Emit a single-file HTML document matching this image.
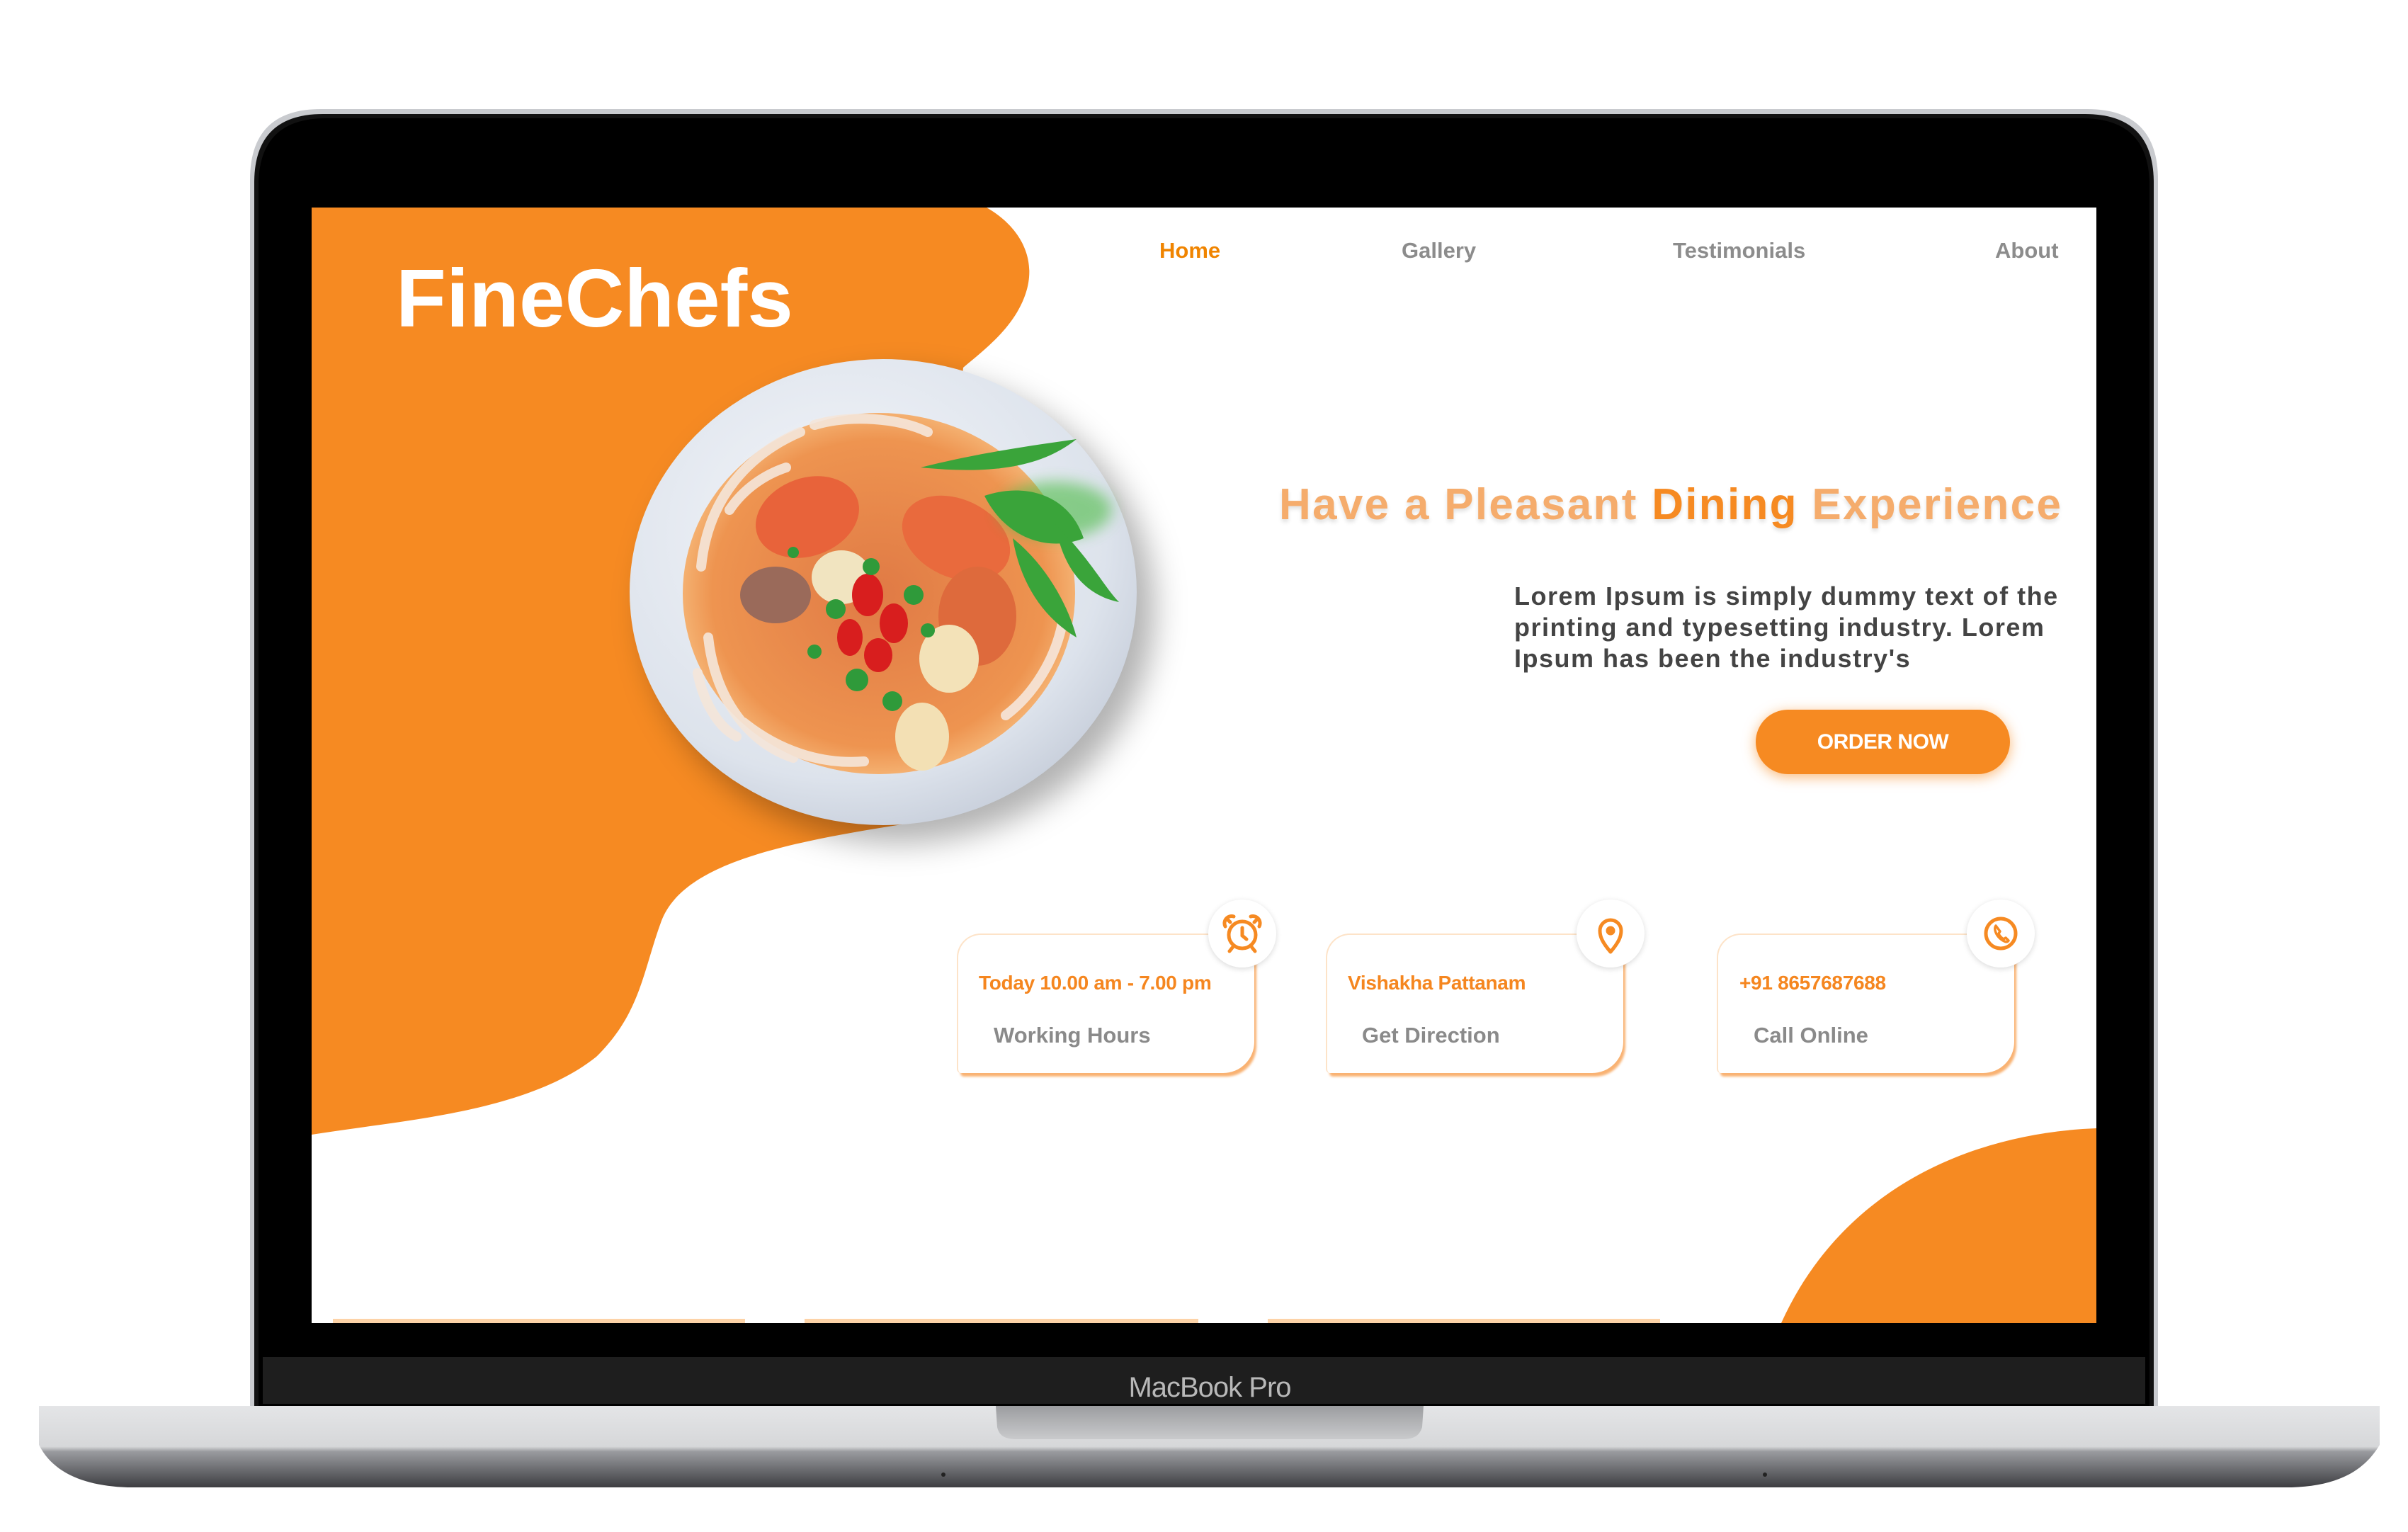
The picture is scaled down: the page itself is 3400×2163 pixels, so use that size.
<!DOCTYPE html>
<html><head><meta charset="utf-8">
<style>
*{margin:0;padding:0;box-sizing:border-box}
body{width:3400px;height:2163px;background:#fff;position:relative;overflow:hidden;font-family:"Liberation Sans",sans-serif}
.a{position:absolute;white-space:nowrap}
.nav{font-size:31px;font-weight:bold;color:#8c8c8c}
.card{position:absolute;width:420px;height:197px;background:#fff;border-radius:34px 6px 44px 6px;border-top:2px solid #fde3c8;border-left:2px solid #fde3c8;box-shadow:4px 6px 3px -1px #f9b272}
.ic{position:absolute;width:96px;height:96px;border-radius:50%;background:#fff;box-shadow:0 2px 8px rgba(0,0,0,.15)}
.o{font-size:28px;font-weight:bold;color:#f5861f;letter-spacing:-.3px}
.g{font-size:31px;font-weight:bold;color:#8a8a8a}
</style></head><body>
<svg class="a" style="left:0;top:0" width="3400" height="2163" viewBox="0 0 3400 2163">
<defs>
<linearGradient id="base" x1="0" y1="0" x2="0" y2="1">
<stop offset="0" stop-color="#e4e5e7"/><stop offset=".5" stop-color="#d6d7d9"/><stop offset=".56" stop-color="#9a9b9f"/><stop offset="1" stop-color="#3d3e42"/></linearGradient>
<linearGradient id="notch" x1="0" y1="0" x2="0" y2="1"><stop offset="0" stop-color="#9c9da0"/><stop offset="1" stop-color="#c9cacc"/></linearGradient>
<radialGradient id="bowl" cx=".42" cy=".38" r=".65"><stop offset="0" stop-color="#f4f6fa"/><stop offset=".8" stop-color="#dde3ec"/><stop offset="1" stop-color="#c9d0dc"/></radialGradient>
<radialGradient id="soup" cx=".5" cy=".5" r=".5"><stop offset="0" stop-color="#e07a45"/><stop offset=".85" stop-color="#ee9450"/><stop offset="1" stop-color="#f4b070"/></radialGradient>
<filter id="sh" x="-30%" y="-30%" width="160%" height="160%"><feGaussianBlur stdDeviation="22"/></filter>
<filter id="gl" x="-30%" y="-30%" width="160%" height="160%"><feGaussianBlur stdDeviation="10"/></filter>
</defs>
<path d="M55,1985 L3360,1985 L3360,2040 C3336,2080 3296,2098 3236,2100 L180,2100 C120,2098 75,2080 55,2040 Z" fill="url(#base)"/>
<path d="M1406,1985 L2010,1985 L2008,2015 C2004,2028 1995,2032 1980,2032 L1436,2032 C1420,2032 1411,2028 1408,2015 Z" fill="url(#notch)"/>
<circle cx="1332" cy="2082" r="3" fill="#222"/><circle cx="2492" cy="2082" r="3" fill="#222"/>
<path d="M353,1985 L353,254 Q353,154 453,154 L2947,154 Q3047,154 3047,254 L3047,1985 Z" fill="#c9cbcf"/>
<path d="M359,1985 L359,258 Q359,161 456,161 L2944,161 Q3041,161 3041,258 L3041,1985 Z" fill="#111"/>
<path d="M365,1985 L365,262 Q365,167 460,167 L2940,167 Q3035,167 3035,262 L3035,1985 Z" fill="#000"/>
<rect x="371" y="1916" width="2658" height="66" fill="#1e1e1e"/>
<text x="1708" y="1972" text-anchor="middle" font-family="Liberation Sans" font-size="40" fill="#b8b8b8" letter-spacing="-1">MacBook Pro</text>
<rect x="440" y="293" width="2520" height="1575" fill="#fff"/>
<path d="M440,293 L1393,293 C1440,320 1465,365 1448,415 C1432,462 1392,492 1360,519 L1300,1160 C1100,1190 965,1220 934,1300 C908,1370 905,1430 842,1492 C742,1572 562,1582 440,1602 Z" fill="#f68a22"/>
<path d="M2515,1868 C2600,1680 2780,1600 2960,1593 L2960,1868 Z" fill="#f68a22"/>
<rect x="470" y="1862" width="582" height="6" fill="#fdd3a8"/>
<rect x="1136" y="1862" width="556" height="6" fill="#fdd3a8"/>
<rect x="1790" y="1862" width="554" height="6" fill="#fdd3a8"/>
<ellipse cx="1270" cy="860" rx="360" ry="330" fill="rgba(0,0,0,.3)" filter="url(#sh)"/>
<ellipse cx="1247" cy="836" rx="358" ry="329" fill="url(#bowl)"/>
<ellipse cx="1241" cy="838" rx="277" ry="255" fill="url(#soup)"/>
<g fill="none" stroke="#f5e6da" stroke-width="14" stroke-linecap="round" opacity=".9">
<path d="M990,800 C1000,700 1060,640 1130,610"/>
<path d="M1000,900 C1010,990 1060,1050 1120,1070"/>
<path d="M1050,1020 C1100,1060 1160,1080 1220,1075"/>
<path d="M1150,600 C1200,585 1270,590 1310,610"/>
<path d="M1420,1010 C1460,980 1490,930 1500,880"/>
<path d="M1030,720 C1050,690 1080,670 1110,660"/>
<path d="M985,950 C995,1000 1020,1030 1040,1040"/>
</g>
<ellipse cx="1140" cy="730" rx="75" ry="55" fill="#e8633a" transform="rotate(-20 1140 730)"/>
<ellipse cx="1350" cy="760" rx="80" ry="55" fill="#e96a3d" transform="rotate(25 1350 760)"/>
<ellipse cx="1380" cy="870" rx="55" ry="70" fill="#de6a3c"/>
<ellipse cx="1095" cy="840" rx="50" ry="40" fill="#9a6a5a"/>
<ellipse cx="1188" cy="815" rx="42" ry="38" fill="#f1e4c0"/>
<ellipse cx="1340" cy="930" rx="42" ry="48" fill="#f3e2b8"/>
<ellipse cx="1302" cy="1040" rx="38" ry="48" fill="#f3e0b4"/>
<g fill="#d81e1e"><ellipse cx="1225" cy="840" rx="22" ry="30"/><ellipse cx="1262" cy="880" rx="20" ry="28"/><ellipse cx="1200" cy="900" rx="18" ry="26"/><ellipse cx="1240" cy="925" rx="20" ry="24"/></g>
<g fill="#2f9a3a"><circle cx="1180" cy="860" r="14"/><circle cx="1230" cy="800" r="12"/><circle cx="1290" cy="840" r="14"/><circle cx="1210" cy="960" r="16"/><circle cx="1260" cy="990" r="14"/><circle cx="1150" cy="920" r="10"/><circle cx="1310" cy="890" r="10"/><circle cx="1120" cy="780" r="8"/></g>
<ellipse cx="1490" cy="720" rx="80" ry="40" fill="#4cbb45" filter="url(#gl)" opacity=".6"/>
<g fill="#3aa43a"><path d="M1300,660 C1380,640 1450,630 1520,620 C1470,660 1400,670 1300,660Z"/><path d="M1390,700 C1450,680 1510,700 1530,760 C1480,780 1420,760 1390,700Z"/><path d="M1430,760 C1480,800 1510,860 1520,900 C1470,870 1440,820 1430,760Z"/><path d="M1490,740 C1540,790 1560,830 1580,850 C1530,840 1500,800 1490,740Z"/></g>
</svg>
<div class="a" style="left:559px;top:354px;font-size:116px;font-weight:bold;color:#fff;letter-spacing:0px">FineChefs</div>
<div class="a nav" style="left:1637px;top:336px;color:#f08400">Home</div>
<div class="a nav" style="left:1979px;top:336px">Gallery</div>
<div class="a nav" style="left:2362px;top:336px">Testimonials</div>
<div class="a nav" style="left:2817px;top:336px">About</div>
<div class="a" style="left:1806px;top:677px;font-size:62px;font-weight:bold;color:#f5ac6c;letter-spacing:2.3px;text-shadow:0 4px 6px rgba(0,0,0,.12)">Have a Pleasant <span style="color:#f68a22">Dining</span> Experience</div>
<div class="a" style="left:2138px;top:820px;font-size:36px;font-weight:bold;color:#444;line-height:44px;letter-spacing:1.5px">Lorem Ipsum is simply dummy text of the<br>printing and typesetting industry. Lorem<br>Ipsum has been the industry's</div>
<div class="a" style="left:2479px;top:1002px;width:359px;height:91px;border-radius:46px;background:#f68a22;box-shadow:0 4px 18px rgba(246,138,34,.6);color:#fff;font-size:30px;font-weight:bold;text-align:center;line-height:91px;letter-spacing:-.5px">ORDER NOW</div>

<div class="card" style="left:1351px;top:1318px"></div>
<div class="card" style="left:1872px;top:1318px"></div>
<div class="card" style="left:2424px;top:1318px"></div>
<div class="a o" style="left:1382px;top:1372px">Today 10.00 am - 7.00 pm</div>
<div class="a o" style="left:1903px;top:1372px">Vishakha Pattanam</div>
<div class="a o" style="left:2456px;top:1372px">+91 8657687688</div>
<div class="a g" style="left:1403px;top:1444px">Working Hours</div>
<div class="a g" style="left:1923px;top:1444px">Get Direction</div>
<div class="a g" style="left:2476px;top:1444px">Call Online</div>

<div class="ic" style="left:1706px;top:1270px"><svg width="96" height="96" viewBox="0 0 96 96" fill="none" stroke="#f68a22" stroke-width="5" stroke-linecap="round"><circle cx="48" cy="50" r="19"/><path d="M48 40v11l6 5M31 32l-5 -5M65 32l5 -5M34 68l-4 5M62 68l4 5"/><path d="M24 38a10 10 0 0 1 12-14M72 38a10 10 0 0 0-12-14"/></svg></div>
<div class="ic" style="left:2226px;top:1270px"><svg width="96" height="96" viewBox="0 0 96 96" fill="none" stroke="#f68a22" stroke-width="5" stroke-linejoin="round"><path d="M48 74C36 60 33 52 33 44a15 15 0 0 1 30 0c0 8-3 16-15 30Z"/><circle cx="48" cy="44" r="4" fill="#f68a22"/></svg></div>
<div class="ic" style="left:2777px;top:1270px"><svg width="96" height="96" viewBox="0 0 96 96" fill="none" stroke="#f68a22" stroke-width="5" stroke-linecap="round"><circle cx="48" cy="48" r="21"/><path d="M41 37c-3 4 0 13 6 18s10 6 12 3l-4-4-3 2c-3-2-6-5-7-8l2-3Z" stroke-width="3.5" stroke-linejoin="round"/></svg></div>
</body></html>
